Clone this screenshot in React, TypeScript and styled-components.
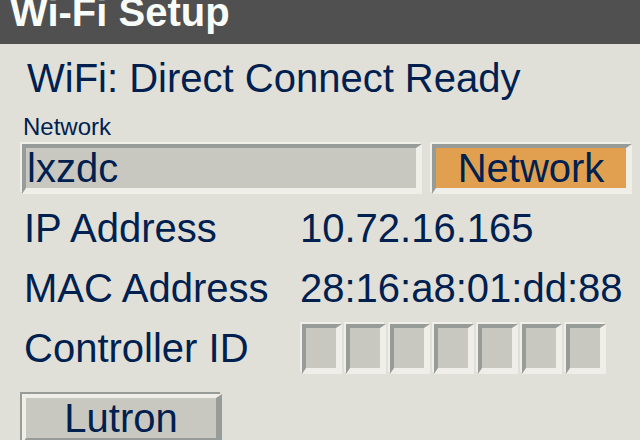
import styled, { createGlobalStyle } from 'styled-components';

const GlobalStyle = createGlobalStyle`
  html, body {
    margin: 0;
    padding: 0;
    background: #e0e0d8;
  }
  body {
    width: 640px;
    height: 440px;
    overflow: hidden;
    font-family: 'Liberation Sans', Arial, sans-serif;
    color: #002050;
  }
`;

const TitleBar = styled.div`
  height: 44px;
  overflow: hidden;
  background: #505050;
  & > h1 {
    margin: 0;
    padding-left: 10px;
    font-size: 40px;
    font-weight: 700;
    line-height: 24px;
    color: #f8fcf8;
  }
`;

const Content = styled.div`
  display: flex;
  flex-direction: column;
  padding: 0 20px;
`;

const Status = styled.div`
  margin-top: 10px;
  padding-left: 7px;
  font-size: 40px;
  line-height: 48px;
`;

const FieldLabel = styled.div`
  margin-top: 13px;
  padding-left: 3px;
  font-size: 24px;
  line-height: 24px;
`;

const FieldRow = styled.div`
  display: flex;
  gap: 10px;
  margin: 5px 0 0 2px;
  & > * {
    flex-shrink: 0;
  }
`;

// sunken bevel: light rim, dark top/left, light bottom/right
const Sunken = styled.div<{ $fill?: string }>`
  box-sizing: border-box;
  background: ${(p) => p.$fill || '#c8c8c0'};
  border-style: solid;
  border-width: 4px 6px 6px 4px;
  border-color: #989c98 #f0eee8 #f0eee8 #989c98;
  box-shadow: -2px -2px 0 0 #f0eee8;
`;

const TextField = styled(Sunken)`
  width: 400px;
  height: 50px;
  padding-left: 1px;
  font-size: 40px;
  line-height: 40px;
`;

const NetworkButton = styled(Sunken)`
  width: 200px;
  height: 50px;
  text-align: center;
  font-size: 40px;
  line-height: 40px;
`;

const InfoRow = styled.div`
  display: grid;
  grid-template-columns: 280px 1fr;
  align-items: center;
  height: 60px;
  font-size: 40px;
  line-height: 60px;
  &:first-of-type {
    margin-top: 4px;
  }
  & > span:first-child {
    padding-left: 4px;
  }
`;

const IdBoxes = styled.div`
  display: flex;
  gap: 4px;
  padding: 2px 0 0 2px;
`;

const IdBox = styled(Sunken)`
  width: 40px;
  height: 50px;
`;

const LutronButton = styled.div`
  box-sizing: border-box;
  width: 200px;
  height: 50px;
  margin: 16px 0 0 2px;
  background: #c8c8c0;
  border-style: solid;
  border-width: 4px 6px 6px 4px;
  border-color: #f0eee8 #989c98 #989c98 #f0eee8;
  box-shadow: -2px -2px 0 0 #989c98;
  text-align: center;
  font-size: 40px;
  line-height: 40px;
`;

const Rows = styled.div`
  display: flex;
  flex-direction: column;
`;

const App: React.FC = () => {
  const info = [
    { label: 'IP Address', value: '10.72.16.165' },
    { label: 'MAC Address', value: '28:16:a8:01:dd:88' },
  ];
  return (
    <>
      <GlobalStyle />
      <TitleBar>
        <h1>Wi-Fi Setup</h1>
      </TitleBar>
      <Content>
        <Status>WiFi: Direct Connect Ready</Status>
        <FieldLabel>Network</FieldLabel>
        <FieldRow>
          <TextField>lxzdc</TextField>
          <NetworkButton $fill={'#e0a050'}>Network</NetworkButton>
        </FieldRow>
        <Rows>
          {info.map((row) => (
            <InfoRow key={row.label}>
              <span>{row.label}</span>
              <span>{row.value}</span>
            </InfoRow>
          ))}
          <InfoRow>
            <span>Controller ID</span>
            <IdBoxes>
              {Array.from({ length: 7 }).map((_, i) => (
                <IdBox key={i} />
              ))}
            </IdBoxes>
          </InfoRow>
        </Rows>
        <LutronButton>Lutron</LutronButton>
      </Content>
    </>
  );
};

export default App;
